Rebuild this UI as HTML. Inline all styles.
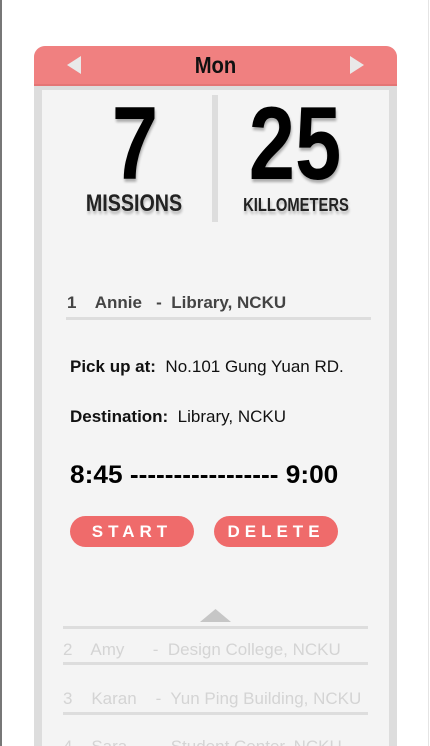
<!DOCTYPE html>
<html style="width:430px;height:746px;overflow:hidden"><head><style>
*{margin:0;padding:0;box-sizing:border-box}
body{width:430px;height:746px;overflow:hidden;background:#fff;font-family:"Liberation Sans",sans-serif;position:relative}
.lb{position:absolute;left:0;top:0;width:2px;height:746px;background:#777}
.rb{position:absolute;left:428px;top:0;width:1px;height:746px;background:#e4e4e4}
.card{position:absolute;left:34px;top:46px;width:363px;height:700px;background:#ddd;border-radius:11px 11px 0 0;overflow:hidden}
.hd{position:absolute;left:0;top:0;width:363px;height:40px;background:#f08080;border-bottom:2px solid #e47575}
.hd .t{position:absolute;left:0;width:100%;top:6px;text-align:center;font-size:23px;font-weight:bold;color:#111;transform:scaleX(.88)}
.inner{position:absolute;left:8px;top:44px;width:347px;height:660px;background:#f4f4f4}
.abs{position:absolute}
.big{font-size:104px;font-weight:bold;color:#000;line-height:1;text-shadow:1px 3px 3px rgba(0,0,0,.3);transform:scaleX(.8);transform-origin:center}
.lbl{font-weight:bold;color:#222;text-shadow:1px 3px 3px rgba(0,0,0,.25);transform:scaleX(.82);white-space:nowrap}
.ln{position:absolute;height:3px;background:#ddd}
.btn{position:absolute;top:516px;width:124px;height:31px;border-radius:16px;background:#ef6b6b;color:#fff;font-weight:bold;font-size:17px;letter-spacing:5px;text-align:center;line-height:31px}
.g{position:absolute;color:#d4d4d4;font-size:17px;white-space:pre}
</style></head><body>
<div class="lb"></div><div class="rb"></div>
<div class="card">
 <div class="hd">
  <svg class="abs" style="left:33px;top:10px" width="14" height="18"><polygon points="14,0 14,18 0,9" fill="#e9e9e9"/></svg>
  <div class="t">Mon</div>
  <svg class="abs" style="left:316px;top:10px" width="14" height="18"><polygon points="0,0 0,18 14,9" fill="#e9e9e9"/></svg>
 </div>
 <div class="inner"></div>
</div>
<div class="abs" style="left:212px;top:95px;width:6px;height:127px;background:#ddd"></div>
<div class="abs big" style="left:85px;top:92px;width:100px;text-align:center">7</div>
<div class="abs big" style="left:225px;top:92px;width:140px;text-align:center">25</div>
<div class="abs lbl" style="left:74px;top:190px;width:120px;text-align:center;font-size:24px">MISSIONS</div>
<div class="abs lbl" style="left:231px;top:195px;width:130px;text-align:center;font-size:18px">KILLOMETERS</div>

<div class="abs" style="left:67px;top:293px;font-size:17px;font-weight:bold;color:#444;white-space:pre">1    Annie   -  Library, NCKU</div>
<div class="ln" style="left:66px;top:317px;width:305px"></div>
<div class="abs" style="left:70px;top:357px;font-size:17px;color:#111;white-space:pre"><b>Pick up at:</b>  No.101 Gung Yuan RD.</div>
<div class="abs" style="left:70px;top:407px;font-size:17px;color:#111;white-space:pre"><b>Destination:</b>  Library, NCKU</div>
<div class="abs" style="left:70px;top:461px;font-size:25px;font-weight:bold;color:#000;white-space:pre;transform:scaleX(1.05);transform-origin:left">8:45 ----------------- 9:00</div>
<div class="btn" style="left:70px">START</div>
<div class="btn" style="left:214px">DELETE</div>

<svg class="abs" style="left:200px;top:609px" width="31" height="13"><polygon points="15.5,0 31,13 0,13" fill="#c6c6c6"/></svg>
<div class="ln" style="left:63px;top:626px;width:305px"></div>
<div class="g" style="left:63px;top:640px">2    Amy      -  Design College, NCKU</div>
<div class="ln" style="left:63px;top:662px;width:305px"></div>
<div class="g" style="left:63px;top:689px">3    Karan    -  Yun Ping Building, NCKU</div>
<div class="ln" style="left:63px;top:712px;width:305px"></div>
<div class="g" style="left:63px;top:737px">4    Sara      -  Student Center, NCKU</div>
</body></html>
